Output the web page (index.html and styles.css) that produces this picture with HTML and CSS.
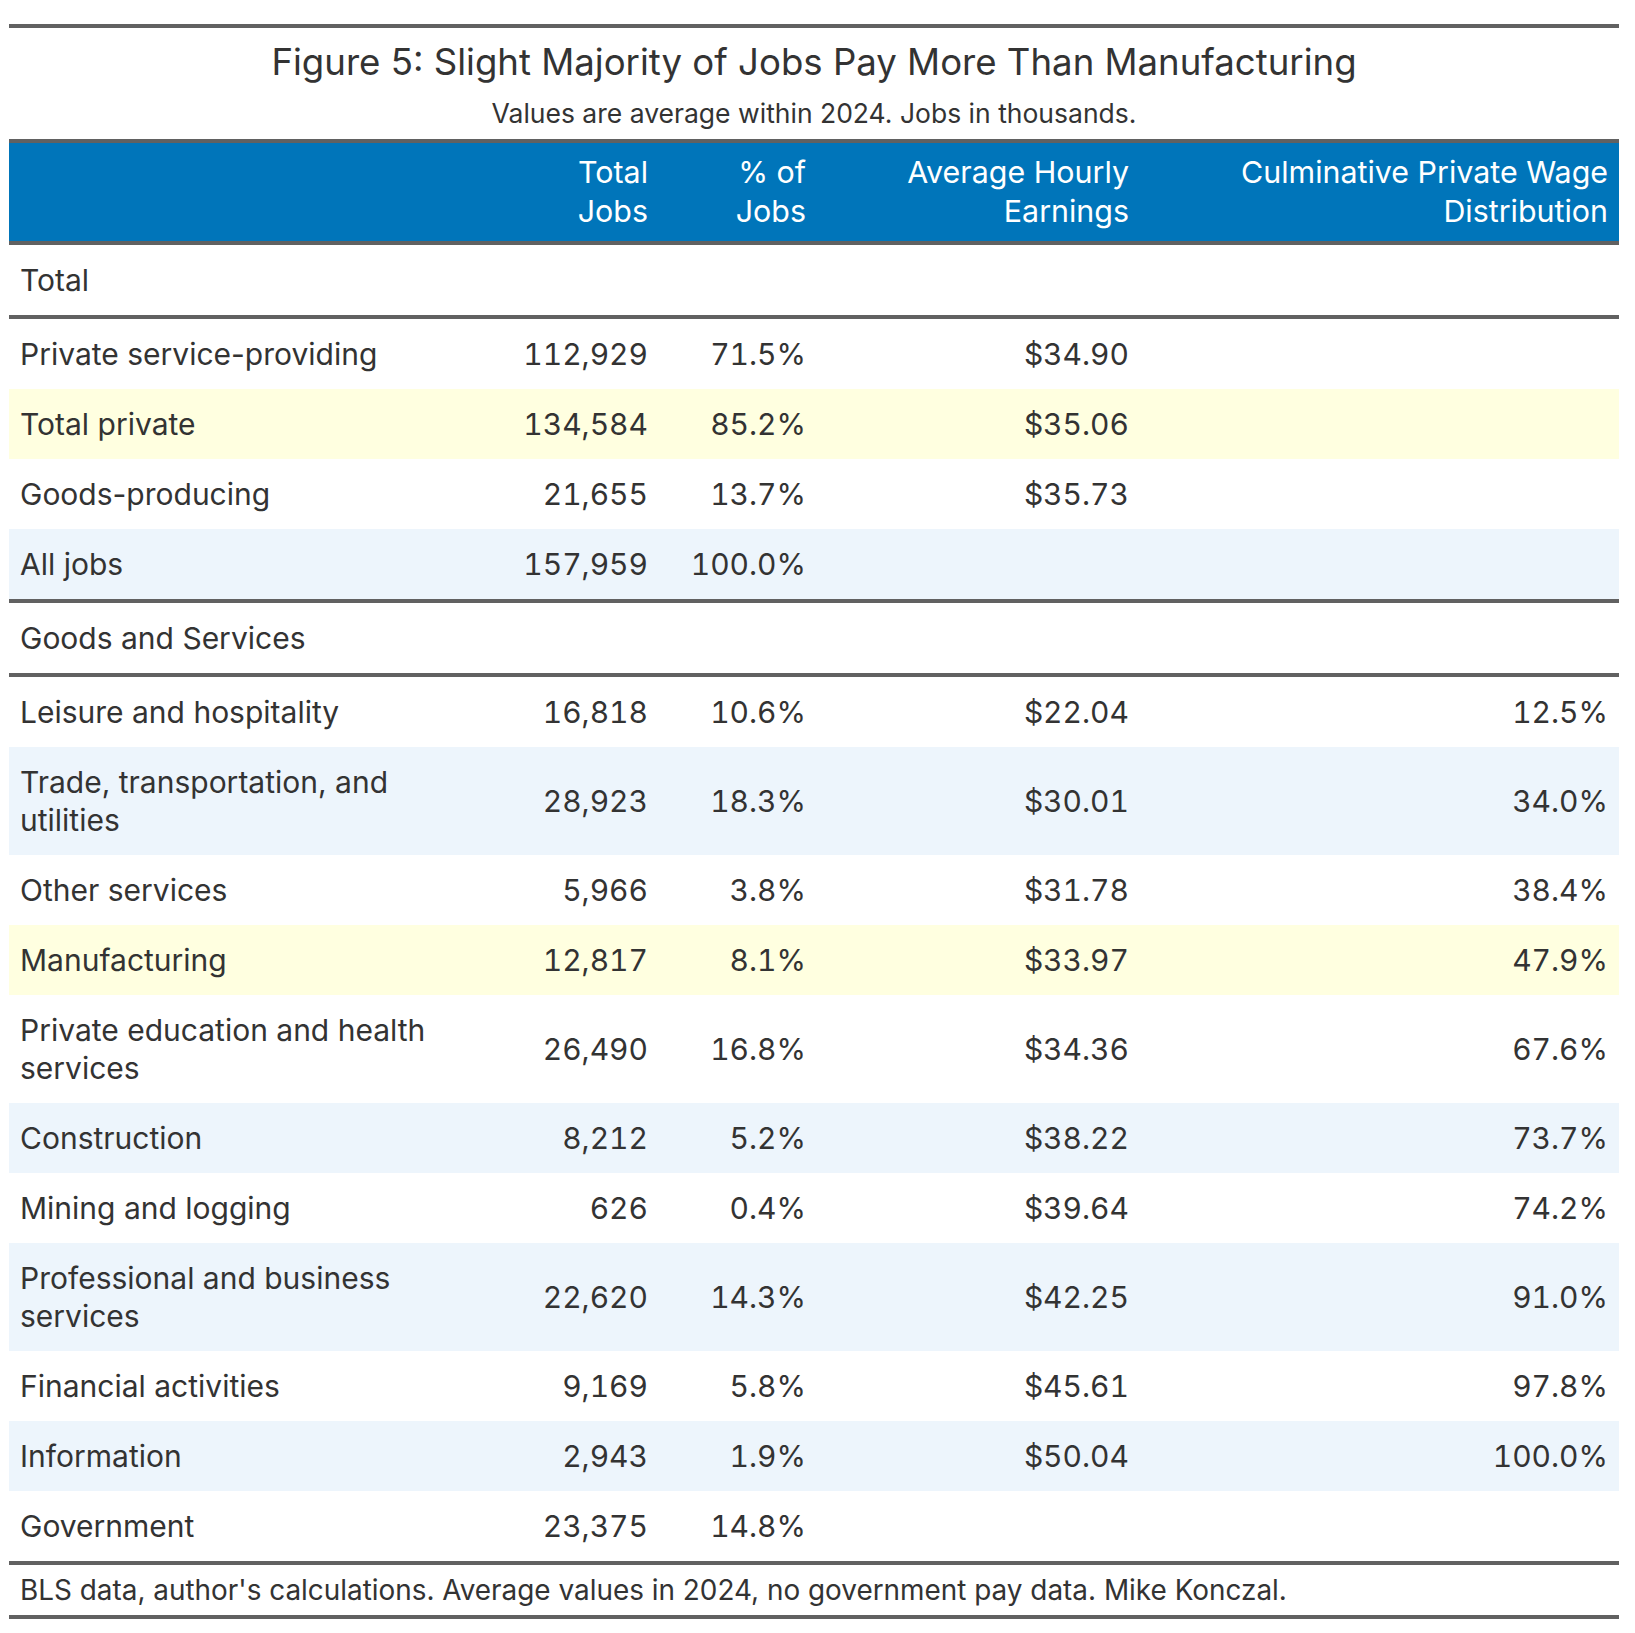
FILE: index.html
```html
<!DOCTYPE html>
<html>
<head>
<meta charset="utf-8">
<link rel="stylesheet" href="styles.css">
</head>
<body>
<div class="wrap">
  <div class="titles">
    <div class="title">Figure 5: Slight Majority of Jobs Pay More Than Manufacturing</div>
    <div class="subtitle">Values are average within 2024. Jobs in thousands.</div>
  </div>
  <table class="tbl">
    <colgroup>
      <col class="c-label">
      <col class="c-jobs">
      <col class="c-pct">
      <col class="c-earn">
      <col class="c-dist">
    </colgroup>
    <thead>
      <tr class="head">
        <th></th>
        <th class="num">Total<br>Jobs</th>
        <th class="num">% of<br>Jobs</th>
        <th class="num">Average Hourly<br>Earnings</th>
        <th class="num">Culminative Private Wage<br>Distribution</th>
      </tr>
    </thead>
    <tbody>
      <tr class="group"><td colspan="5">Total</td></tr>
      <tr><td>Private service-providing</td><td class="num">112,929</td><td class="num">71.5%</td><td class="num">$34.90</td><td class="num"></td></tr>
      <tr class="hl"><td>Total private</td><td class="num">134,584</td><td class="num">85.2%</td><td class="num">$35.06</td><td class="num"></td></tr>
      <tr><td>Goods-producing</td><td class="num">21,655</td><td class="num">13.7%</td><td class="num">$35.73</td><td class="num"></td></tr>
      <tr class="stripe"><td>All jobs</td><td class="num">157,959</td><td class="num">100.0%</td><td class="num"></td><td class="num"></td></tr>
      <tr class="group"><td colspan="5">Goods and Services</td></tr>
      <tr><td>Leisure and hospitality</td><td class="num">16,818</td><td class="num">10.6%</td><td class="num">$22.04</td><td class="num">12.5%</td></tr>
      <tr class="stripe"><td>Trade, transportation, and utilities</td><td class="num">28,923</td><td class="num">18.3%</td><td class="num">$30.01</td><td class="num">34.0%</td></tr>
      <tr><td>Other services</td><td class="num">5,966</td><td class="num">3.8%</td><td class="num">$31.78</td><td class="num">38.4%</td></tr>
      <tr class="hl"><td>Manufacturing</td><td class="num">12,817</td><td class="num">8.1%</td><td class="num">$33.97</td><td class="num">47.9%</td></tr>
      <tr><td>Private education and health services</td><td class="num">26,490</td><td class="num">16.8%</td><td class="num">$34.36</td><td class="num">67.6%</td></tr>
      <tr class="stripe"><td>Construction</td><td class="num">8,212</td><td class="num">5.2%</td><td class="num">$38.22</td><td class="num">73.7%</td></tr>
      <tr><td>Mining and logging</td><td class="num">626</td><td class="num">0.4%</td><td class="num">$39.64</td><td class="num">74.2%</td></tr>
      <tr class="stripe"><td>Professional and business services</td><td class="num">22,620</td><td class="num">14.3%</td><td class="num">$42.25</td><td class="num">91.0%</td></tr>
      <tr><td>Financial activities</td><td class="num">9,169</td><td class="num">5.8%</td><td class="num">$45.61</td><td class="num">97.8%</td></tr>
      <tr class="stripe"><td>Information</td><td class="num">2,943</td><td class="num">1.9%</td><td class="num">$50.04</td><td class="num">100.0%</td></tr>
      <tr class="last"><td>Government</td><td class="num">23,375</td><td class="num">14.8%</td><td class="num"></td><td class="num"></td></tr>
    </tbody>
    <tfoot>
      <tr class="foot"><td colspan="5">BLS data, author's calculations. Average values in 2024, no government pay data. Mike Konczal.</td></tr>
    </tfoot>
  </table>
</div>
</body>
</html>
```
FILE: styles.css
```css
html, body {
  margin: 0;
  padding: 0;
  background: #ffffff;
}
body {
  font-family: Inter, "Noto Sans", sans-serif;
  color: #333333;
}
.wrap {
  width: 1610px;
  margin: 24px 0 0 9px;
  border-top: 4px solid #616161;
}
.titles {
  text-align: center;
  padding-top: 12px;
  height: 111px;
  box-sizing: border-box;
}
.title {
  font-size: 36.6px;
  line-height: 44px;
  color: #333333;
}
.subtitle {
  font-size: 26.5px;
  line-height: 32px;
  margin-top: 13px;
  color: #333333;
}
.tbl {
  width: 1610px;
  border-collapse: collapse;
  table-layout: fixed;
  font-size: 30px;
  line-height: 38px;
}
.c-label { width: 483px; }
.c-jobs { width: 167px; }
.c-pct { width: 158px; }
.c-earn { width: 323px; }
.c-dist { width: 479px; }
.tbl td, .tbl th {
  padding: 16px 11px;
  font-weight: normal;
  text-align: left;
  vertical-align: middle;
}
.tbl td.num {
  text-align: right;
  font-variant-numeric: tabular-nums;
}
.tbl th.num {
  text-align: right;
  font-size: 30.4px;
}
.head {
  background: #0075ba;
  color: #ffffff;
  border-top: 4px solid #616161;
  border-bottom: 4px solid #616161;
}
.head th {
  padding-top: 10px;
  padding-bottom: 10px;
  line-height: 39px;
}
.group td {
  border-top: 4px solid #616161;
  border-bottom: 4px solid #616161;
}
.stripe { background: #edf5fc; }
.hl { background: #ffffe0; }
.last td { border-bottom: 4px solid #616161; }
.foot td {
  font-size: 27.9px;
  line-height: 30px;
  padding-top: 10px;
  padding-bottom: 10px;
  border-bottom: 4px solid #616161;
}
```
